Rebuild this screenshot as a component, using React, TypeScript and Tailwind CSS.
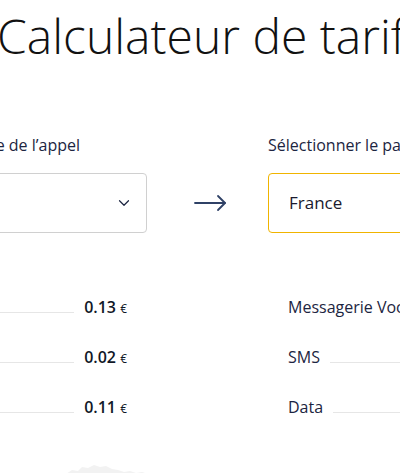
import { ChevronDown } from 'lucide-react';

const leftRows = [
  { label: 'Appels', value: '0.13' },
  { label: 'Appels reçus', value: '0.02' },
  { label: 'Data', value: '0.11' },
];

const rightRows = ['Messagerie Vocale', 'SMS', 'Data'];

function Row({ label, value }: { label: string; value?: string }) {
  return (
    <div className="flex h-[50px] items-baseline pt-[13px] leading-6">
      <span className="whitespace-nowrap text-[16px] text-[#1c2541]">{label}</span>
      <div className="ml-[10px] h-px flex-1 bg-[#e6e6e6]" />
      {value && (
        <span className="ml-[10px] whitespace-nowrap text-[16px] font-semibold text-[#111827]">
          {value} <span className="text-[12px] font-normal">€</span>
        </span>
      )}
    </div>
  );
}

export default function App() {
  return (
    <div className="relative h-[473px] w-[400px] overflow-hidden bg-white font-['Open_Sans',sans-serif]">
      <h1 className="ml-[-3px] mt-[7px] whitespace-nowrap text-[48px] font-light leading-[58px] text-[#111]">
        Calculateur de tarifs
      </h1>

      <div className="ml-[-123px] mt-[68px] flex w-[661px]">
        <div className="w-[270px]">
          <div className="flex w-[203px] justify-end whitespace-nowrap text-[16px] leading-6 text-[#1c2541]">
            Sélectionner l’origine de l’appel
          </div>
          <div className="mt-4 flex h-[60px] items-center justify-end rounded border border-[#d0d0d0] pr-[13px]">
            <ChevronDown className="h-[18px] w-[18px] text-[#1c2541]" strokeWidth={1.6} />
          </div>
          <div className="mt-[49px] pr-[20px]">
            {leftRows.map((r) => (
              <Row key={r.value} label={r.label} value={r.value} />
            ))}
          </div>
        </div>

        <div className="flex w-[121px] flex-col">
          <div className="h-6" />
          <div className="mt-4 flex h-[60px] items-center justify-center pl-[5px]">
            <svg width="34" height="18" viewBox="0 0 34 18" fill="none" stroke="#2f4166" strokeWidth="1.8" strokeLinecap="round" strokeLinejoin="round">
              <path d="M2 9h30" />
              <path d="M25 2l7 7-7 7" />
            </svg>
          </div>
        </div>

        <div className="w-[270px]">
          <div className="whitespace-nowrap text-[16px] leading-6 text-[#1c2541]">Sélectionner le pays</div>
          <div className="mt-4 flex h-[60px] items-center rounded border border-[#f0b400] pl-5 text-[17px] text-[#1a1a2e]">
            France
          </div>
          <div className="mt-[49px] pl-[20px]">
            {rightRows.map((r) => (
              <Row key={r} label={r} />
            ))}
          </div>
        </div>
      </div>

      <svg className="absolute left-[50px] top-[462px]" width="110" height="14" viewBox="0 0 110 14">
        <path
          d="M4 14 L10 11 L16 12 L22 8 L28 9 L32 5 L38 6 L44 3 L50 5 L56 4 L62 7 L68 8 L74 10 L80 9 L86 11 L92 10 L98 12 L104 11 L110 14 Z"
          fill="#f2f2f2"
        />
      </svg>
    </div>
  );
}
